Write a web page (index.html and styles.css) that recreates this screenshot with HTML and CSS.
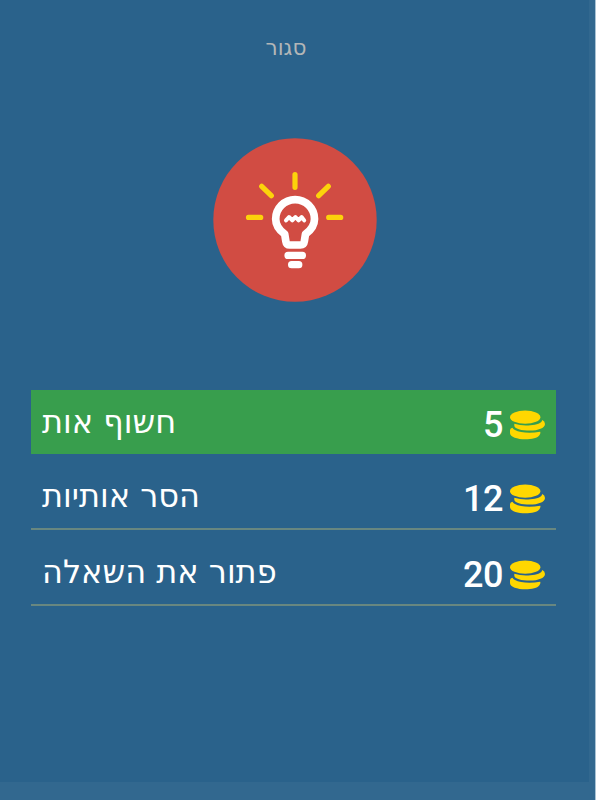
FILE: index.html
```html
<!DOCTYPE html>
<html lang="he">
<head>
  <meta charset="UTF-8" />
  <meta name="viewport" content="width=device-width, initial-scale=1.0"/>
  <title>רמזים</title>
  <link rel="stylesheet" href="styles.css">
</head>
<body>
  <svg class="symbols" width="0" height="0">
    <symbol id="coins" viewBox="0 0 36 30">
      <ellipse cx="15.2" cy="7.2" rx="15.2" ry="6.6"/>
      <path d="M4.300 13.800Q10 15.600 16 15.600C22 15.600 28.500 14.600 31 12.300Q32 11.300 32.200 9.900Q34.900 11 35 14C35 18.200 28 20.600 20 20.600C11.500 20.600 4.300 18.900 4.300 15.500Z"/>
      <path d="M0 20Q0.300 18 2.500 17.800Q3 19 5 20C10 22.800 20 23.400 30.200 21.800Q31 22.500 29.600 25C28 28 21.500 29.300 15.300 29.300C7.500 29.300 0 27 0 23Z"/>
    </symbol>
  </svg>

  <div class="screen">
    <div class="panel">
      <button class="close">סגור</button>

      <svg class="bulb" viewBox="0 0 164 164">
        <circle cx="82" cy="82" r="81.700" fill="#d14c43"/>
        <g stroke="#fcd30b" stroke-width="5.200" stroke-linecap="round">
          <path d="M82 36.500V49.300M48.700 48.300L58.300 57.700M115.300 48.300L105.700 57.700M35.500 79.400H47.700M115.700 79.400H127.700"/>
        </g>
        <g fill="none" stroke="#fff" stroke-linecap="round" stroke-linejoin="round">
          <path stroke-width="7.700" d="M71.700 96.200C66 92 62.700 88 62.700 81A19.400 19.400 0 0 1 101.500 81C101.500 88 98.200 92 92.500 96.200L91.300 103.500Q90.800 107 87.500 107H76.700Q73.400 107 72.900 103.500Z"/>
          <path stroke-width="4" d="M73 82.400L76 79L79.300 82.400L82.400 79L85.600 82.400L88.600 79L91.200 82.400"/>
          <path stroke-width="7.200" d="M75 117.400H89.400M78.600 126.700H85.800"/>
        </g>
      </svg>

      <div class="options">
        <div class="option active">
          <span class="label" dir="rtl">חשוף אות</span>
          <span class="price">5</span>
          <svg class="coins"><use href="#coins"/></svg>
        </div>
        <div class="option">
          <span class="label" dir="rtl">הסר אותיות</span>
          <span class="price">12</span>
          <svg class="coins"><use href="#coins"/></svg>
        </div>
        <div class="option">
          <span class="label" dir="rtl">פתור את השאלה</span>
          <span class="price">20</span>
          <svg class="coins"><use href="#coins"/></svg>
        </div>
      </div>
    </div>
  </div>
</body>
</html>
```
FILE: styles.css
```css
* {
  box-sizing: border-box;
}
body {
  margin: 0;
  background: #fff;
  font-family: 'DejaVu Sans', sans-serif;
}
.symbols {
  display: block;
}
.screen {
  width: 596px;
  height: 800px;
  background: #32688f;
  border-right: 1px solid #a9c3d5;
}
.panel {
  width: 589px;
  height: 782px;
  background: #2a628b;
  display: flex;
  flex-direction: column;
  align-items: flex-start;
}
.close {
  width: 120px;
  height: 30px;
  margin: 33px 0 0 226px;
  padding: 0;
  border: none;
  background: none;
  color: #b3b6b7;
  font-family: inherit;
  font-size: 21.5px;
  line-height: 30px;
  cursor: pointer;
}
.bulb {
  width: 164px;
  height: 164px;
  margin: 75px 0 0 213px;
}
.options {
  width: 525px;
  margin: 88px 0 0 31px;
}
.option {
  display: flex;
  align-items: center;
  height: 76px;
  padding: 16px 10px 0 11px;
  border-bottom: 2px solid #688780;
  color: #fff;
}
.option.active {
  height: 64px;
  padding-top: 6px;
  background: #389e4d;
  border: none;
}
.label {
  padding-bottom: 6px;
  font-size: 32px;
  line-height: 40px;
}
.price {
  margin-left: auto;
  font-family: Roboto, sans-serif;
  font-size: 36px;
  font-weight: 500;
  line-height: 40px;
  letter-spacing: -0.5px;
}
.coins {
  width: 36px;
  height: 30px;
  margin-left: 7px;
  fill: #ffd700;
}
```
